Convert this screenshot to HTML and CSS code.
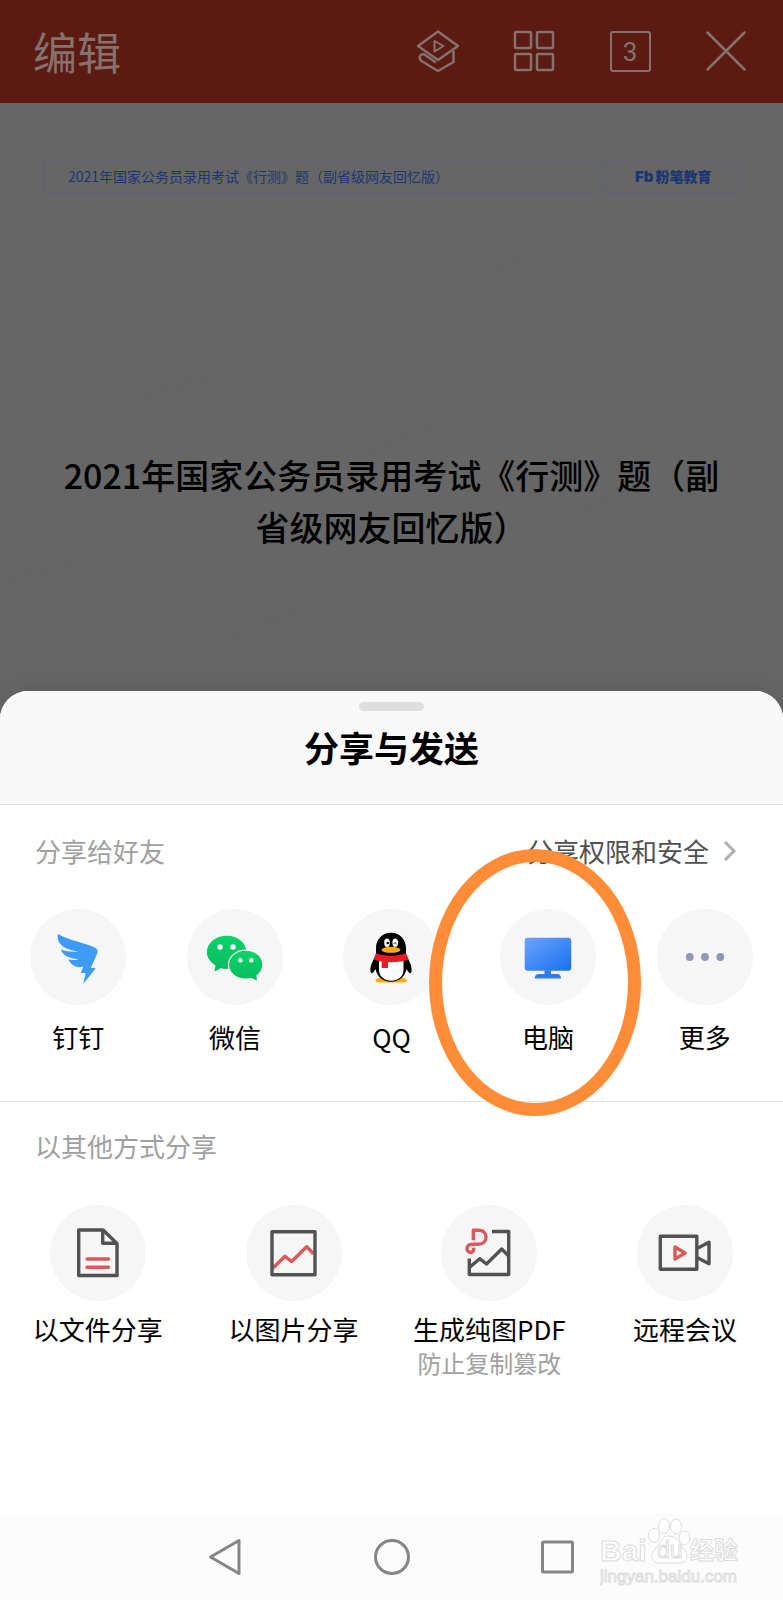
FILE: index.html
```html
<!DOCTYPE html>
<html lang="zh-CN">
<head>
<meta charset="utf-8">
<meta name="viewport" content="width=device-width, initial-scale=1">
<title>分享与发送</title>
<link rel="stylesheet" href="styles.css">
</head>
<body>
<div class="screen">
  <header class="topbar">
    <h2 class="topbar-title">编辑</h2>
    <div class="topbar-actions">
      <button class="icon-btn" aria-label="播放">
        <svg viewBox="0 0 48 48" class="line"><path d="M24 4.500 44 19 24 33 4 19Z"/><path d="M20.500 14v10.500L29.500 19Z" stroke-width="2"/><path d="M39.500 24V35L24 44 7.500 34C4 31 6 26 10.500 27.500L22 35.500"/></svg>
      </button>
      <button class="icon-btn" aria-label="缩略图">
        <svg viewBox="0 0 48 48" class="line"><rect x="5" y="5" width="16" height="16" rx="1"/><rect x="27" y="5" width="16" height="16" rx="1"/><rect x="5" y="27" width="16" height="16" rx="1"/><rect x="27" y="27" width="16" height="16" rx="1"/></svg>
      </button>
      <button class="icon-btn" aria-label="标签页"><span class="tab-count">3</span></button>
      <button class="icon-btn" aria-label="关闭">
        <svg viewBox="0 0 48 48" class="line"><path d="M5.500 5.500l37 37M42.500 5.500l-37 37" stroke-linecap="round"/></svg>
      </button>
    </div>
  </header>

  <main class="document">
    <svg class="marks" viewBox="0 0 783 588" aria-hidden="true">
      <g text-anchor="middle">
        <text transform="translate(512 170) rotate(-22)">粉笔教育</text>
        <text transform="translate(179 291) rotate(-22)">粉笔教育</text>
        <text transform="translate(402 341) rotate(-22)">粉笔教育</text>
        <text transform="translate(597 408) rotate(-22)">粉笔教育</text>
        <text transform="translate(42 475) rotate(-22)">粉笔教育</text>
        <text transform="translate(267 528) rotate(-22)">粉笔教育</text>
      </g>
    </svg>
    <div class="doc-head">
      <p class="doc-head-title">2021年国家公务员录用考试《行测》题（副省级网友回忆版）</p>
      <svg class="doc-head-arrow" viewBox="0 0 18 32" width="18" height="32"><path d="M0 .5 11 16 0 31.500M18 .5H6L17 16 6 31.500H18"/></svg>
      <p class="doc-head-brand"><b>Fb</b>粉笔教育</p>
    </div>
    <h1 class="doc-title">2021年国家公务员录用考试《行测》题（副省级网友回忆版）</h1>
  </main>

  <section class="sheet" aria-labelledby="sheet-title">
    <header class="sheet-head">
      <div class="handle"></div>
      <h2 class="sheet-title" id="sheet-title">分享与发送</h2>
    </header>

    <div class="group friends">
      <div class="group-head">
        <h3 class="group-title">分享给好友</h3>
        <a class="group-link" href="#">分享权限和安全
          <svg viewBox="0 0 14 24" width="14" height="24"><path d="M2 3l9 9-9 9"/></svg>
        </a>
      </div>
      <div class="tiles five">
        <button class="tile">
          <svg class="disc" viewBox="0 0 96 96"><path fill="#3d9bf5" d="M28.300 25C37 31 58 34.500 65.500 39C67.500 40.300 68 42 67.300 43.700C65.500 49 63 54 60.700 58.700L65.700 59.300 53.300 75 55.700 64 50.700 63.700 53.300 57.700C46 59.500 41 55.500 38.300 50.500C42 51.200 46 51 49 50.300C39 49.500 32 46 31 40.500C36 42.500 43 43 48 42.500C36 40.500 27 36.500 27.700 26C27.700 25 28 24.800 28.300 25Z"/></svg>
          <span class="tile-name">钉钉</span>
        </button>
        <button class="tile">
          <svg class="disc" viewBox="0 0 96 96">
            <defs><linearGradient id="wx" x1="0" y1="0" x2="0" y2="1"><stop offset="0" stop-color="#0bd468"/><stop offset="1" stop-color="#08ba60"/></linearGradient></defs>
            <path fill="url(#wx)" d="M39.700 26.700c11 0 19.800 7.300 19.800 16.600s-8.800 16.700-19.800 16.700c-2.200 0-4.200-.2-6-.8l-5 2.700c-1 .4-1.300 0-1.100-1l.9-4.500c-5.200-3.300-8.600-7.700-8.600-13.100 0-9.300 8.800-16.600 19.800-16.600Z"/>
            <circle cx="33" cy="38" r="2.700" fill="#fff"/><circle cx="46" cy="38" r="2.700" fill="#fff"/>
            <path fill="url(#wx)" stroke="#f6f6f6" stroke-width="2.400" paint-order="stroke" d="M58.700 41.700c9.200 0 16.600 6.200 16.600 14 0 4.300-2.300 8.100-6 10.700l.6 4c.1.900-.5 1-1.100.6l-4.500-2.300c-1.700.6-3.600.9-5.600.9-9.200 0-16.600-6.200-16.600-13.900s7.400-14 16.600-14Z"/>
            <circle cx="53.300" cy="51.300" r="2.200" fill="#fff"/><circle cx="64.300" cy="51.300" r="2.200" fill="#fff"/>
          </svg>
          <span class="tile-name">微信</span>
        </button>
        <button class="tile">
          <svg class="disc" viewBox="0 0 96 96">
            <path fill="#faab07" d="M32.500 72c0-3 6-4.500 10-3h11c4-1.500 10.500 0 10.500 3 0 1.500-5 1.500-8 1.500H41c-3 0-8.500 0-8.500-1.500Z"/>
            <path d="M48 23.700C38.500 23.700 33 31 33 39v6L28.500 55C27 59 27 64 28.700 64.300 30 64.500 31.500 61.500 32.500 60 34 68 40 72.700 48 72.700S62 68 63.500 60C64.500 61.500 66 64.500 67.500 64.300 69 64 69 59 67.500 55L63 45V39C63 31 57.500 23.700 48 23.700Z"/>
            <path fill="#fff" d="M36 51h24.500v10c0 6.500-5.500 10.700-12.300 10.700S36 67.500 36 61Z"/>
            <ellipse cx="44" cy="33.700" rx="2.800" ry="4.200" fill="#fff"/><ellipse cx="52.200" cy="33.700" rx="2.800" ry="4.200" fill="#fff"/>
            <circle cx="44.800" cy="34" r="1.300"/><path d="M50.800 34.800q1.200-2.500 2.500 0" fill="none" stroke="#000"/>
            <ellipse cx="48" cy="40.800" rx="9.500" ry="3" fill="#faab07"/>
            <path fill="#eb1923" d="M33 44.300C41 47.500 55 47.500 63 44.300L65.500 50.500C56 54 40 54 31 50.500Z"/><path fill="#eb1923" d="M38.700 50.500h6.300V59H38.700Z"/>
          </svg>
          <span class="tile-name">QQ</span>
        </button>
        <button class="tile">
          <svg class="disc" viewBox="0 0 96 96">
            <defs><linearGradient id="pc" x1="0" y1="0" x2="1" y2="1"><stop offset="0" stop-color="#6ea3fb"/><stop offset="1" stop-color="#1670f0"/></linearGradient></defs>
            <rect x="24.700" y="28.700" width="46.500" height="33" rx="3" fill="url(#pc)"/>
            <path fill="#2f7ce4" d="M44.500 61.500H51V65H57C60 65 61 67 61 69.500H34.700C34.700 67 36 65 39 65H44.500Z"/>
          </svg>
          <span class="tile-name">电脑</span>
        </button>
        <button class="tile">
          <svg class="disc" viewBox="0 0 96 96" fill="#8f99b6"><circle cx="32.700" cy="48" r="3.900"/><circle cx="48" cy="48" r="3.900"/><circle cx="63.300" cy="48" r="3.900"/></svg>
          <span class="tile-name">更多</span>
        </button>
      </div>
      <div class="highlight" aria-hidden="true"></div>
    </div>

    <div class="group others">
      <div class="group-head">
        <h3 class="group-title">以其他方式分享</h3>
      </div>
      <div class="tiles four">
        <button class="tile">
          <svg class="disc outline" viewBox="0 0 96 96"><path d="M53 25H28.700V70.500H67V38.500Z"/><path d="M52.700 25V38.300H67"/><path class="red" stroke-linecap="round" d="M37 54H58.500M37 62.200H58.500"/></svg>
          <span class="tile-name">以文件分享</span>
        </button>
        <button class="tile">
          <svg class="disc outline" viewBox="0 0 96 96"><path class="red" d="M27.300 62.700 39 51.300 45.700 56.500 60.700 41.700 67.500 48.700"/><rect x="26" y="26.700" width="43" height="43"/></svg>
          <span class="tile-name">以图片分享</span>
        </button>
        <button class="tile">
          <svg class="disc outline" viewBox="0 0 96 96"><path d="M51 26.500H67.700V69.500H28.300V53.500"/><path d="M28.300 62.500 38.700 53.700 45.500 59 60.700 44 67.700 51"/><path class="red" d="M32.300 35.300V25.300H37.500C43 25.300 45 29 45 32C45 36.500 42 39.300 37 39.300H31C27.500 39.300 26 41.500 26 43.700C26 46.300 28 47.500 29.700 47.500C32 47.500 33 45.700 32.700 42.700"/></svg>
          <span class="tile-name">生成纯图PDF</span>
          <span class="tile-note">防止复制篡改</span>
        </button>
        <button class="tile">
          <svg class="disc outline" viewBox="0 0 96 96"><rect x="23.300" y="31.300" width="36.500" height="33"/><path d="M60 43.500 72 37.300V58.700L60 52.500"/><path class="red" d="M38 42V54L48 48Z"/></svg>
          <span class="tile-name">远程会议</span>
        </button>
      </div>
    </div>
  </section>

  <nav class="navbar" aria-label="系统导航">
    <button class="nav-btn" aria-label="返回"><svg viewBox="0 0 40 40"><path d="M33 3.500V36.500L4.500 20Z"/></svg></button>
    <button class="nav-btn" aria-label="主页"><svg viewBox="0 0 40 40"><circle cx="20" cy="20" r="16.500"/></svg></button>
    <button class="nav-btn" aria-label="最近任务"><svg viewBox="0 0 40 40"><rect x="4.500" y="5" width="30" height="30" rx="1"/></svg></button>
    <div class="source">
      <svg viewBox="0 0 142 72" width="142" height="72" role="img" aria-label="Baidu经验 jingyan.baidu.com">
        <g fill="#fff" stroke="#dcdcdc">
          <text class="wm-latin" x="0" y="45">Bai</text>
          <ellipse cx="54" cy="19.500" rx="5.500" ry="7"/><ellipse cx="64" cy="10" rx="5.500" ry="7.500"/><ellipse cx="76" cy="10.500" rx="5.500" ry="7.500"/><ellipse cx="84.500" cy="22" rx="5.500" ry="7"/>
          <path d="M69 20c6 0 9 4.500 12 9s6 7 6 11.500c0 4-3 6.500-7 6.500H59c-4 0-7-2.500-7-6.500 0-4.500 3-7 6-11.500s5-9 11-9Z"/>
          <text class="wm-du" x="57" y="42">du</text>
          <text class="wm-cjk" x="90" y="43">经验</text>
          <text class="wm-url" x="0" y="66">jingyan.baidu.com</text>
        </g>
      </svg>
    </div>
  </nav>
</div>
</body>
</html>
```

FILE: styles.css
```css
* {
  box-sizing: border-box;
}

body {
  margin: 0;
  background: #666;
  color: #000;
  font-family: "Noto Sans CJK SC", "Noto Sans", sans-serif;
}

h1, h2, h3, p {
  margin: 0;
}

button {
  padding: 0;
  border: 0;
  background: none;
  color: inherit;
  font: inherit;
}

svg {
  display: block;
}

.screen {
  display: flex;
  flex-direction: column;
  min-height: 100vh;
}

/* Dimmed editor behind the sheet */
.topbar {
  display: flex;
  align-items: center;
  justify-content: space-between;
  height: 103px;
  padding: 0 33px 1px;
  background: #5b1a12;
  color: #85716e;
}

.topbar-title {
  font-size: 44px;
  font-weight: 400;
  line-height: 48px;
}

.topbar-actions {
  display: flex;
  gap: 48px;
}

.icon-btn {
  display: grid;
  place-items: center;
  width: 48px;
  height: 48px;
}

.icon-btn svg {
  width: 48px;
  height: 48px;
}

.line {
  fill: none;
  stroke: currentColor;
  stroke-width: 2.500;
  stroke-linejoin: round;
}

.tab-count {
  width: 41px;
  height: 41px;
  border: 2px solid currentColor;
  border-radius: 3px;
  font-family: Roboto, sans-serif;
  font-size: 26px;
  line-height: 38px;
  text-align: center;
}

.document {
  position: relative;
  height: 588px;
  padding: 58px 44px 0;
  isolation: isolate;
}

.marks {
  position: absolute;
  inset: 0;
  z-index: -1;
  width: 100%;
  height: 100%;
  fill: #656565;
  font-size: 18px;
}

.doc-head {
  display: flex;
  height: 32px;
  color: #1b3674;
  font-size: 14px;
  line-height: 29px;
}

.doc-head-title {
  flex: 1;
  padding-left: 23px;
  border: 1px solid #5a6274;
  border-right: 0;
  white-space: nowrap;
}

.doc-head-arrow {
  fill: none;
  stroke: #5a6274;
}

.doc-head-brand {
  width: 124px;
  padding-left: 20px;
  border: 1px solid #5a6274;
  border-left: 0;
  font-weight: 900;
  white-space: nowrap;
}

.doc-head-brand b {
  margin-right: 2px;
  font-family: Inter, sans-serif;
  font-size: 15px;
  font-weight: 900;
}

.doc-title {
  margin-top: 256px;
  padding: 0 12px;
  font-size: 34px;
  font-weight: 500;
  line-height: 52px;
  text-align: center;
}

/* Share sheet */
.sheet {
  position: relative;
  flex: 1;
  border-radius: 28px 28px 0 0;
  background: #fff;
  box-shadow: 0 0 24px rgba(0, 0, 0, 0.1);
}

.sheet-head {
  display: flex;
  flex-direction: column;
  align-items: center;
  gap: 12px;
  height: 114px;
  padding-top: 11px;
  border-bottom: 1px solid #e2e2e2;
  border-radius: 28px 28px 0 0;
  background: #f9f9f9;
}

.handle {
  width: 65px;
  height: 9px;
  border-radius: 5px;
  background: #dfdfdf;
}

.sheet-title {
  font-size: 35px;
  font-weight: 700;
  line-height: 48px;
}

.group {
  position: relative;
}

.friends {
  height: 297px;
  border-bottom: 1px solid #e2e2e2;
}

.group-head {
  display: flex;
  justify-content: space-between;
  padding: 26px 46px 0 35px;
  font-size: 26px;
  line-height: 40px;
}

.others .group-head {
  padding-top: 24px;
}

.group-title {
  color: #a0a0a0;
  font-size: 26px;
  font-weight: 400;
}

.group-link {
  display: flex;
  align-items: center;
  gap: 14px;
  color: #505050;
  font-weight: 400;
  text-decoration: none;
}

.group-link svg {
  fill: none;
  stroke: #b0b0b0;
  stroke-width: 3;
}

.tiles {
  display: grid;
  margin-top: 38px;
}

.others .tiles {
  margin-top: 39px;
}

.five {
  grid-template-columns: repeat(5, 1fr);
}

.four {
  grid-template-columns: repeat(4, 1fr);
}

.tile {
  display: flex;
  flex-direction: column;
  align-items: center;
  font-size: 26px;
  line-height: 36px;
  white-space: nowrap;
}

.disc {
  width: 96px;
  height: 96px;
  border-radius: 50%;
  background: #f6f6f6;
}

.tile-name {
  margin-top: 14px;
}

.others .tile-name {
  margin-top: 10px;
}

.tile-note {
  color: #a0a0a0;
  font-size: 24px;
  line-height: 32px;
}

.outline {
  fill: none;
  stroke: #525252;
  stroke-width: 3.400;
  stroke-linejoin: round;
}

.outline .red {
  stroke: #dc595b;
}

.highlight {
  position: absolute;
  top: 44px;
  left: calc(70% - 119px);
  width: 212px;
  height: 267px;
  border: 13px solid #ff8d38;
  border-radius: 50%;
  pointer-events: none;
  z-index: 1;
}

/* System navigation */
.navbar {
  position: relative;
  display: flex;
  align-items: center;
  justify-content: center;
  gap: 126px;
  height: 86px;
  background: #fcfcfc;
}

.nav-btn svg {
  width: 40px;
  height: 40px;
  fill: none;
  stroke: #858585;
  stroke-width: 3;
  stroke-linejoin: round;
}

.source {
  position: absolute;
  top: 2px;
  right: 41px;
}

.wm-latin {
  font: 700 30px "Liberation Sans", sans-serif;
}

.wm-du {
  font: 400 23px "Liberation Sans", sans-serif;
}

.wm-cjk {
  font: 700 24px "Noto Sans CJK SC", sans-serif;
}

.wm-url {
  font: 400 17px "Liberation Sans", sans-serif;
}
```
